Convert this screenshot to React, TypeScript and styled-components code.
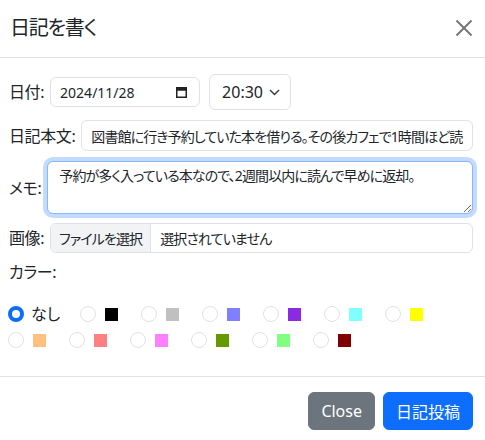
import React, { useEffect, useRef } from 'react'
import styled, { createGlobalStyle } from 'styled-components'

const GlobalStyle = createGlobalStyle`
  html, body {
    margin: 0;
    padding: 0;
    background: #fff;
  }
  body {
    font-family: "Noto Sans", "Noto Sans CJK JP", sans-serif;
    font-feature-settings: "palt";
    color: #212529;
    font-size: 16px;
  }
  * {
    box-sizing: border-box;
  }
`

const Modal = styled.div`
  width: 485px;
  height: 440px;
  display: flex;
  flex-direction: column;
  background: #fff;
  overflow: hidden;
`

const Header = styled.div`
  height: 58px;
  flex-shrink: 0;
  display: flex;
  align-items: center;
  justify-content: space-between;
  padding: 0 12px 2px 10px;
  border-bottom: 1px solid #dee2e6;
`

const Title = styled.h5`
  margin: 0;
  font-size: 20px;
  font-weight: 400;
  letter-spacing: -1.2px;
  line-height: 1.5;
`

const CloseX = styled.button`
  width: 18px;
  height: 18px;
  padding: 0;
  border: 0;
  background: transparent;
  display: flex;
  opacity: 0.55;
`

const Body = styled.div`
  flex: 1;
  display: flex;
  flex-direction: column;
  padding: 16px 12px 0 9px;
`

const Row = styled.div<{ $mb?: number }>`
  display: flex;
  align-items: center;
  margin-bottom: ${(p) => p.$mb ?? 10}px;
`

const Label = styled.label`
  font-size: 16px;
  line-height: 24px;
  letter-spacing: -0.4px;
  margin-right: 6px;
  white-space: nowrap;
`

const Box = styled.div<{ $w?: number; $h?: number }>`
  display: flex;
  align-items: center;
  height: ${(p) => p.$h ?? 30}px;
  ${(p) => (p.$w ? `width: ${p.$w}px;` : 'flex: 1;')}
  border: 1px solid #dee2e6;
  border-radius: 6px;
  background: #fff;
`

const DateBox = styled(Box)`
  justify-content: space-between;
  padding: 0 12px 0 9px;
  font-size: 14px;
`

const TimeBox = styled(Box)`
  margin-left: 9px;
  padding: 0 10px 0 12px;
  justify-content: space-between;
  font-size: 16px;
`

const TextInput = styled.input`
  flex: 1;
  min-width: 0;
  height: 31px;
  padding: 0 9px;
  border: 1px solid #dee2e6;
  border-radius: 6px;
  font: inherit;
  font-size: 14px;
  letter-spacing: -0.9px;
  color: #212529;
  outline: none;
`

const Memo = styled.textarea`
  flex: 1;
  min-width: 0;
  height: 53px;
  padding: 2px 11px;
  border: 1px solid #86b7fe;
  border-radius: 6px;
  box-shadow: 0 0 0 4px rgba(13, 110, 253, 0.25);
  font: inherit;
  font-size: 14px;
  letter-spacing: -0.9px;
  line-height: 24px;
  color: #212529;
  outline: none;
  resize: vertical;
`

const FileBox = styled(Box)`
  overflow: hidden;
  font-size: 14px;
  letter-spacing: -0.9px;
`

const FileButton = styled.div`
  height: 100%;
  display: flex;
  align-items: center;
  padding: 0 8px;
  background: #f1f3f5;
  border-right: 1px solid #dee2e6;
`

const FileText = styled.span`
  padding-left: 9px;
`

const Palette = styled.div`
  width: 430px;
  display: flex;
  flex-wrap: wrap;
  column-gap: 23px;
  margin-left: -1px;
  margin-bottom: 23px;
`

const Option = styled.div<{ $shift?: number }>`
  display: flex;
  align-items: center;
  height: 26px;
  gap: 9px;
  margin-right: ${(p) => p.$shift ?? 0}px;
`

const Radio = styled.span<{ $checked?: boolean }>`
  width: 16px;
  height: 16px;
  border-radius: 50%;
  flex-shrink: 0;
  border: ${(p) => (p.$checked ? '4px solid #0d6efd' : '1px solid #dee2e6')};
  background: #fff;
`

const NoneText = styled.span`
  margin-left: -2px;
  white-space: nowrap;
  font-size: 16px;
  line-height: 24px;
`

const Swatch = styled.span<{ $color: string }>`
  width: 13px;
  height: 13px;
  background: ${(p) => p.$color};
`

const Footer = styled.div`
  border-top: 1px solid #dee2e6;
  display: flex;
  justify-content: flex-end;
  gap: 8px;
  padding: 15px 12px 10px;
`

const Button = styled.button<{ $variant: 'secondary' | 'primary' }>`
  height: 38px;
  padding: 0 12px;
  border-radius: 6px;
  font: inherit;
  font-size: 16px;
  color: #fff;
  border: 1px solid ${(p) => (p.$variant === 'primary' ? '#0d6efd' : '#6c757d')};
  background: ${(p) => (p.$variant === 'primary' ? '#0d6efd' : '#6c757d')};
`

const colors = [
  '#000000', '#c0c0c0', '#8080ff', '#8a2be2', '#80ffff', '#ffff00',
  '#ffc080', '#ff8080', '#ff80ff', '#669900', '#80ff80', '#800000',
]

const memoText = '予約が多く入っている本なので、2週間以内に読んで早めに返却。'

export default function App() {
  const memoRef = useRef<HTMLTextAreaElement>(null)

  useEffect(() => {
    const el = memoRef.current
    if (el) {
      el.focus()
      el.setSelectionRange(memoText.length, memoText.length)
    }
  }, [])

  return (
    <Modal>
      <GlobalStyle />
      <Header>
        <Title>日記を書く</Title>
        <CloseX aria-label="Close">
          <svg width="18" height="18" viewBox="0 0 18 18">
            <path d="M1.5 1.5 L16.5 16.5 M16.5 1.5 L1.5 16.5" stroke="#000" strokeWidth="1.8" />
          </svg>
        </CloseX>
      </Header>
      <Body>
        <Row>
          <Label>日付:</Label>
          <DateBox $w={150}>
            <span>2024/11/28</span>
            <svg width="11" height="11" viewBox="0 0 11 11">
              <rect x="0.75" y="0.75" width="9.5" height="9.5" fill="none" stroke="#222" strokeWidth="1.5" />
              <rect x="0.75" y="0.75" width="9.5" height="3" fill="#222" />
            </svg>
          </DateBox>
          <TimeBox $w={82} $h={36}>
            <span>20:30</span>
            <svg width="11" height="7" viewBox="0 0 11 7">
              <path d="M1 1 L5.5 5.5 L10 1" fill="none" stroke="#343a40" strokeWidth="1.4" />
            </svg>
          </TimeBox>
        </Row>
        <Row>
          <Label>日記本文:</Label>
          <TextInput
            readOnly
            value="図書館に行き予約していた本を借りる。その後カフェで1時間ほど読書した。"
          />
        </Row>
        <Row $mb={9}>
          <Label>メモ:</Label>
          <Memo ref={memoRef} defaultValue={memoText} />
        </Row>
        <Row $mb={7}>
          <Label>画像:</Label>
          <FileBox>
            <FileButton>ファイルを選択</FileButton>
            <FileText>選択されていません</FileText>
          </FileBox>
        </Row>
        <Row $mb={17}>
          <Label>カラー:</Label>
        </Row>
        <Palette>
          <Option $shift={-3}>
            <Radio $checked />
            <NoneText>なし</NoneText>
          </Option>
          {colors.map((c) => (
            <Option key={c}>
              <Radio />
              <Swatch $color={c} />
            </Option>
          ))}
        </Palette>
      </Body>
      <Footer>
        <Button $variant="secondary">Close</Button>
        <Button $variant="primary">日記投稿</Button>
      </Footer>
    </Modal>
  )
}
